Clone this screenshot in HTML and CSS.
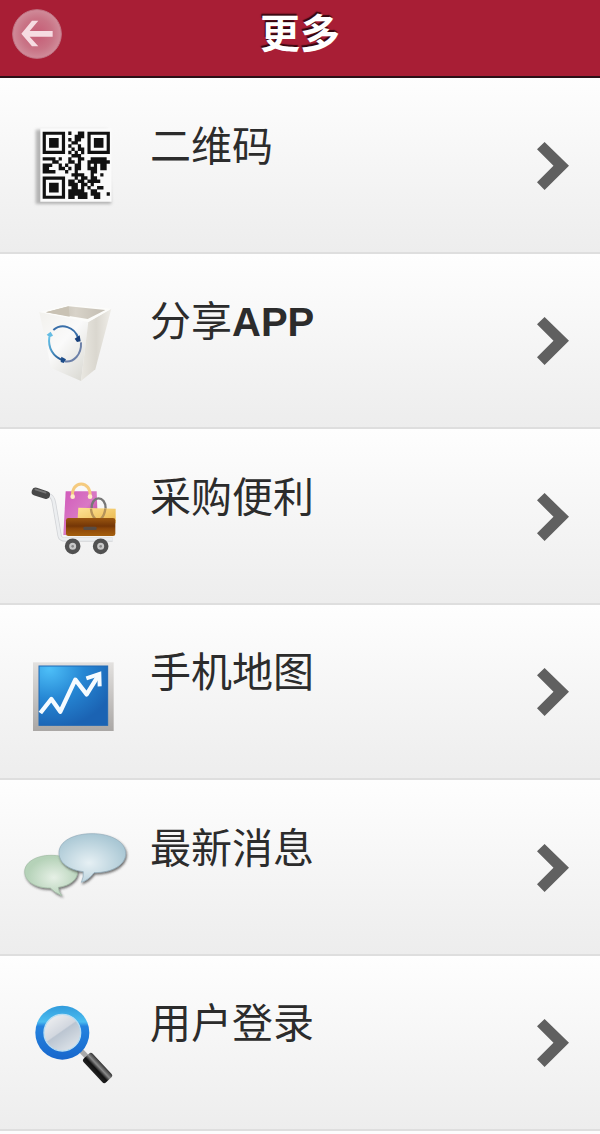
FILE: index.html
```html
<!DOCTYPE html>
<html lang="zh-CN">
<head>
<meta charset="utf-8">
<meta name="viewport" content="width=device-width, initial-scale=1">
<title>更多</title>
<link rel="stylesheet" href="styles.css">
</head>
<body>
<header class="bar">
  <button class="back" type="button" aria-label="返回">
    <svg viewBox="0 0 150 150" aria-hidden="true">
      <defs><radialGradient id="backFill"><stop offset="0" stop-color="#c65b75"/><stop offset=".65" stop-color="#c97486"/><stop offset="1" stop-color="#d08c9a"/></radialGradient></defs>
      <circle cx="75" cy="75" r="73" fill="url(#backFill)" stroke="#c17585" stroke-width="3"/>
      <path d="M28 74 L60 35 H79 L53 66 H122 V83 H53 L79 112 H60Z" fill="#f6dce2"/>
    </svg>
  </button>
  <h1 class="title">更多</h1>
</header>
<nav class="menu">
  <a class="row" href="#qr">
    <svg class="icon" viewBox="0 0 330 315" aria-hidden="true">
      <defs><filter id="soft" x="-20%" y="-20%" width="140%" height="140%"><feGaussianBlur stdDeviation="4"/></filter></defs>
      <path d="M47 44 H262 L274 267 H47Z" fill="#999" opacity=".7" filter="url(#soft)"/>
      <path d="M61 40 H275 V260 H61Z" fill="#fbfbfb"/>
      <g transform="translate(68 50) scale(9.6)" fill="none" stroke="#111">
        <path d="M.5 .5h6v6h-6zM14.5 .5h6v6h-6zM.5 14.5h6v6h-6z"/>
        <path stroke-width="3" d="M2 3.5h3M16 3.5h3M2 17.5h3"/>
        <path stroke-width="1.08" d="M8 .5h1M11 .5h2M10 1.5h3M8 2.5h1M10 2.5h2M9 3.5h2M8 4.5h1M11 4.5h1M9 5.5h1M11 5.5h2M8 6.5h1M10 6.5h1M12 6.5h1M9 7.5h3M0 8.5h4M5 8.5h1M8 8.5h1M11 8.5h2M15 8.5h5M3 9.5h2M8 9.5h2M11 9.5h1M14 9.5h7M0 10.5h3M5 10.5h1M7 10.5h1M10 10.5h2M14 10.5h1M16 10.5h1M18 10.5h2M0 11.5h2M5 11.5h2M8 11.5h1M10 11.5h2M14 11.5h3M18 11.5h2M0 12.5h4M7 12.5h1M10 12.5h1M15 12.5h2M9 13.5h4M15 13.5h1M18 13.5h1M10 14.5h1M12 14.5h2M15 14.5h2M8 15.5h2M11 15.5h2M14 15.5h4M8 16.5h3M12 16.5h2M15 16.5h1M9 17.5h2M12 17.5h1M14 17.5h1M17 17.5h2M8 18.5h5M15 18.5h2M8 19.5h6M15 19.5h3M20 19.5h1M8 20.5h2M11 20.5h3M16 20.5h2"/>
      </g>
    </svg>
    <span class="label">二维码</span>
    <svg class="chevron" viewBox="0 0 97 145" aria-hidden="true"><path d="M0 22 L23 0 L97 72 L23 145 L0 122 L50 72Z"/></svg>
  </a>
  <a class="row" href="#share">
    <svg class="icon" viewBox="0 0 330 315" aria-hidden="true">
      <defs>
        <linearGradient id="binFront" x2=".8" y2="1"><stop offset="0" stop-color="#f2f1ed"/><stop offset=".5" stop-color="#fafafa"/><stop offset="1" stop-color="#dcdbd5"/></linearGradient>
        <linearGradient id="binSide" x2="1"><stop offset="0" stop-color="#e9e7e1"/><stop offset=".5" stop-color="#dad7cf"/><stop offset="1" stop-color="#efede8"/></linearGradient>
        <linearGradient id="binIn" x2="1"><stop offset="0" stop-color="#b9b3a6"/><stop offset=".5" stop-color="#d8d3c9"/><stop offset="1" stop-color="#c3bdb2"/></linearGradient>
        <linearGradient id="ring" x2="1" y2="1"><stop offset="0" stop-color="#68c3ea"/><stop offset="1" stop-color="#21508c"/></linearGradient>
      </defs>
      <path d="M58 63 L205 93 L183 270 L93 231Z" fill="url(#binFront)"/>
      <path d="M205 93 L274 53 L226 235 L183 270Z" fill="url(#binSide)"/>
      <path d="M58 63 L145 41 L274 53 L205 93Z" fill="#fcfcfa"/>
      <path d="M78 64 L146 46 L256 57 L203 84Z" fill="url(#binIn)"/>
      <path d="M146 46 L149 77 L78 64Z" fill="#c9c2b4"/>
      <g fill="none" stroke-width="6">
        <path d="M100 117 C125 96 163 107 174 140" stroke="#396fa9"/>
        <path d="M88 137 C83 173 101 197 126 207" stroke="url(#ring)"/>
        <path d="M134 211 C161 215 185 191 183 154" stroke="#6c80a8"/>
      </g>
      <path d="M164 143 L179 133 L182 151 L171 153Z" fill="#173f7b"/>
      <path d="M80 131 L92 122 L99 134 L89 139Z" fill="#64bce3"/>
      <path d="M124 197 L138 205 L131 216 L122 213Z" fill="#1b4b88"/>
    </svg>
    <span class="label">分享<b class="latin">APP</b></span>
    <svg class="chevron" viewBox="0 0 97 145" aria-hidden="true"><path d="M0 22 L23 0 L97 72 L23 145 L0 122 L50 72Z"/></svg>
  </a>
  <a class="row" href="#shopping">
    <svg class="icon" viewBox="0 0 330 315" aria-hidden="true">
      <defs>
        <linearGradient id="pink" x2="1" y2="1"><stop offset="0" stop-color="#d15abb"/><stop offset=".5" stop-color="#d979c4"/><stop offset="1" stop-color="#a91d87"/></linearGradient>
        <linearGradient id="brown" x2="0" y2="1"><stop offset="0" stop-color="#9a5610"/><stop offset=".45" stop-color="#743606"/><stop offset=".6" stop-color="#8d4709"/><stop offset="1" stop-color="#a5600e"/></linearGradient>
        <linearGradient id="gold" x2="1" y2="1"><stop offset="0" stop-color="#ffe496"/><stop offset="1" stop-color="#e8b54a"/></linearGradient>
      </defs>
      <g transform="translate(0 12)">
        <path d="M85 75 Q99 79 102 99 L119 198 Q121 209 137 209 H278" fill="none" stroke="#d3d5d8" stroke-width="13" stroke-linejoin="round"/>
        <path d="M87 75 Q99 79 102 99 L119 198 Q121 208 137 208 H278" fill="none" stroke="#eceef0" stroke-width="8"/>
        <path d="M47 65 L78 75" stroke="#484848" stroke-width="24" stroke-linecap="round"/>
        <path d="M46 58 L77 68" stroke="#777" stroke-width="5" stroke-linecap="round"/>
        <path d="M137 64 H230 L235 195 H130Z" fill="url(#pink)"/>
        <path d="M158 81 C151 29 216 29 210 81" fill="none" stroke="#f5cb80" stroke-width="9"/>
        <circle cx="158" cy="80" r="7" fill="#ffebc6"/><circle cx="210" cy="80" r="7" fill="#ffebc6"/>
        <path d="M215 116 C213 75 258 75 257 116" fill="none" stroke="#777" stroke-width="7"/>
        <path d="M175 113 L287 116 V160 H172Z" fill="url(#gold)"/>
        <path d="M213 116 Q214 136 227 148 M256 116 Q254 136 242 148" fill="none" stroke="#b5935a" stroke-width="7"/>
        <rect x="138" y="144" width="148" height="54" rx="7" fill="url(#brown)"/>
        <rect x="190" y="170" width="40" height="10" rx="4" fill="#574c45"/>
        <circle cx="158" cy="229" r="17" fill="#c8c8c8" stroke="#515151" stroke-width="13"/><circle cx="242" cy="229" r="17" fill="#c8c8c8" stroke="#515151" stroke-width="13"/>
        <circle cx="158" cy="229" r="4" fill="#888"/><circle cx="242" cy="229" r="4" fill="#888"/>
      </g>
    </svg>
    <span class="label">采购便利</span>
    <svg class="chevron" viewBox="0 0 97 145" aria-hidden="true"><path d="M0 22 L23 0 L97 72 L23 145 L0 122 L50 72Z"/></svg>
  </a>
  <a class="row" href="#map">
    <svg class="icon" viewBox="0 0 330 315" aria-hidden="true">
      <defs>
        <radialGradient id="chart" cx=".15" cy=".05" r="1"><stop offset="0" stop-color="#4dbff8"/><stop offset=".5" stop-color="#2687d4"/><stop offset="1" stop-color="#1b63b3"/></radialGradient>
        <linearGradient id="frame" x2="0" y2="1"><stop offset="0" stop-color="#e3e1df"/><stop offset="1" stop-color="#aaa7a5"/></linearGradient>
      </defs>
      <g transform="translate(0 25)">
        <rect x="39" y="36" width="242" height="206" fill="url(#frame)"/>
        <rect x="57" y="47" width="206" height="178" fill="url(#chart)" stroke="#2169b4" stroke-width="3"/>
        <path d="M61 188 L94 146 L121 184 L166 88 L200 132 L235 76" fill="none" stroke="#f5fbff" stroke-width="13" stroke-linejoin="round"/>
        <path d="M199 84 L238 71 L239 108" fill="none" stroke="#f5fbff" stroke-width="12"/>
      </g>
    </svg>
    <span class="label">手机地图</span>
    <svg class="chevron" viewBox="0 0 97 145" aria-hidden="true"><path d="M0 22 L23 0 L97 72 L23 145 L0 122 L50 72Z"/></svg>
  </a>
  <a class="row" href="#news">
    <svg class="icon" viewBox="0 0 330 315" aria-hidden="true">
      <defs>
        <radialGradient id="green" cx=".55" cy=".55"><stop offset="0" stop-color="#e6f0e6"/><stop offset="1" stop-color="#b5d2b8"/></radialGradient>
        <radialGradient id="blue" cx=".45" cy=".6" r=".6"><stop offset="0" stop-color="#e6f0f4"/><stop offset="1" stop-color="#a9c7d4"/></radialGradient>
        <filter id="drop" x="-10%" y="-10%" width="125%" height="130%"><feDropShadow dx="3" dy="5" stdDeviation="3" flood-color="#333" flood-opacity=".7"/></filter>
      </defs>
      <g transform="translate(-15 9)">
        <path d="M106 204 C61 204 29 184 29 155 C29 127 63 106 108 106 C154 106 188 126 188 154 C188 178 166 197 130 202 Q130 215 141 227 Q120 219 106 204Z" fill="url(#green)" stroke="#a2bba4" stroke-width="2" filter="url(#drop)"/>
        <path d="M205 155 C160 149 132 128 132 98 C132 64 175 41 231 41 C289 41 332 66 332 100 C332 135 292 158 237 158 Q221 180 199 187 Q207 170 205 155Z" fill="url(#blue)" stroke="#91abb9" stroke-width="2" filter="url(#drop)"/>
      </g>
    </svg>
    <span class="label">最新消息</span>
    <svg class="chevron" viewBox="0 0 97 145" aria-hidden="true"><path d="M0 22 L23 0 L97 72 L23 145 L0 122 L50 72Z"/></svg>
  </a>
  <a class="row" href="#login">
    <svg class="icon" viewBox="0 0 330 315" aria-hidden="true">
      <defs>
        <linearGradient id="rim" x2="0" y2="1"><stop offset="0" stop-color="#319bdc"/><stop offset=".3" stop-color="#4bbdf0"/><stop offset=".38" stop-color="#2583df"/><stop offset="1" stop-color="#1767cc"/></linearGradient>
        <linearGradient id="lens" x2=".7" y2="1"><stop offset="0" stop-color="#f5f5f5"/><stop offset=".52" stop-color="#d2d7df"/><stop offset=".55" stop-color="#bbc5d1"/><stop offset="1" stop-color="#dce2e8"/></linearGradient>
        <linearGradient id="grip" x2="1"><stop offset="0" stop-color="#222"/><stop offset=".35" stop-color="#111"/><stop offset=".65" stop-color="#8b8b8b"/><stop offset="1" stop-color="#333"/></linearGradient>
      </defs>
      <g transform="translate(0 8)">
        <path d="M181 163 L204 187" stroke="#aaa" stroke-width="15"/>
        <g transform="translate(233 218) rotate(-43)"><rect x="-18" y="-50" width="37" height="98" rx="8" fill="url(#grip)"/></g>
        <circle cx="127" cy="111" r="81" fill="url(#rim)"/>
        <circle cx="127" cy="111" r="55" fill="url(#lens)" stroke="#b9def3" stroke-width="4"/>
      </g>
    </svg>
    <span class="label">用户登录</span>
    <svg class="chevron" viewBox="0 0 97 145" aria-hidden="true"><path d="M0 22 L23 0 L97 72 L23 145 L0 122 L50 72Z"/></svg>
  </a>
</nav>
</body>
</html>
```
FILE: styles.css
```css
* {
  box-sizing: border-box;
}

body {
  display: flex;
  flex-direction: column;
  min-height: 100vh;
  margin: 0;
  padding-bottom: 3px;
  background: #fcfcfc;
  color: #2c2c2c;
  font-family: "Liberation Sans", "Noto Sans CJK SC", sans-serif;
}

.bar {
  display: grid;
  grid-template-columns: 1fr auto 1fr;
  align-items: center;
  height: 78px;
  padding: 0 12px 8px;
  border-bottom: 2px solid #2b1017;
  background: #a81e35;
}

.back {
  width: 50px;
  height: 50px;
  padding: 0;
  border: 0;
  background: none;
}

.back svg {
  display: block;
  width: 100%;
}

.title {
  margin: 0;
  color: #fff;
  font-size: 40px;
  font-weight: 700;
  line-height: 48px;
  text-shadow: -1px -2px 1px #35070f;
}

.menu {
  display: flex;
  flex: 1;
  flex-direction: column;
}

.row {
  display: flex;
  flex: 1;
  align-items: center;
  min-height: 144px;
  padding: 2px 31px 0 20px;
  border-bottom: 2px solid #dedede;
  background: linear-gradient(#fefefe, #ededed);
  color: inherit;
  text-decoration: none;
}

.icon {
  flex: none;
  width: 110px;
  height: 105px;
  margin-top: 4px;
  overflow: visible;
}

.label {
  flex: 1;
  padding: 0 0 38px 20px;
  font-size: 41px;
  line-height: 48px;
}

.latin {
  font-size: 40px;
}

.chevron {
  flex: none;
  width: 32px;
  height: 48px;
  fill: #606060;
}
```
